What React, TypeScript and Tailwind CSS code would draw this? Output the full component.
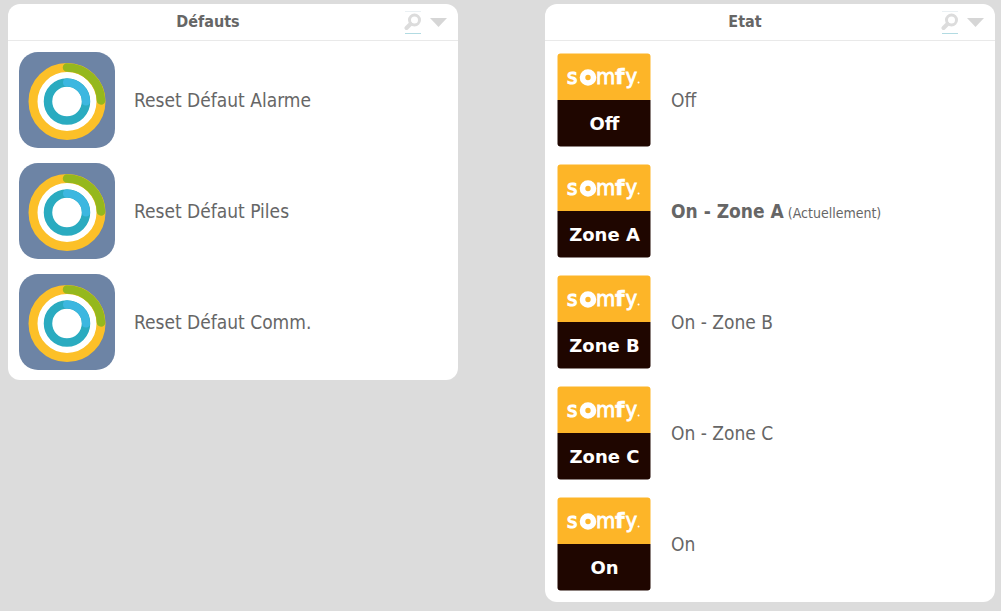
import React from "react";

function RingsIcon() {
  return (
    <svg viewBox="0 0 96 96" className="size-24 shrink-0" aria-hidden="true">
      <rect width="96" height="96" rx="19" fill="#6d84a5" />
      <circle cx="48" cy="49.500" r="34" fill="#fff" />
      <circle cx="48" cy="49.500" r="34" fill="none" stroke="#fcc028" strokeWidth="9" />
      <path d="M48 15.500A34 34 0 0 1 82 48.500" fill="none" stroke="#95b81d" strokeWidth="8.500" strokeLinecap="round" />
      <circle cx="48" cy="49.500" r="19" fill="none" stroke="#2aabc0" strokeWidth="8.500" />
      <path d="M48 30.500A19 19 0 0 1 67 49.500" fill="none" stroke="#3cb7e0" strokeWidth="8" strokeLinecap="round" />
    </svg>
  );
}

function SomfyTile({ label }: { label: string }) {
  return (
    <svg viewBox="0 0 96 96" className="size-24 shrink-0" aria-hidden="true">
      <path d="M1.500 48V4.500a3 3 0 0 1 3-3h87a3 3 0 0 1 3 3V48z" fill="#fdb528" />
      <path d="M1.500 48h93v43.500a3 3 0 0 1-3 3h-87a3 3 0 0 1-3-3z" fill="#1f0600" />
      <g fill="#fff" fontFamily="'DejaVu Sans Condensed', 'DejaVu Sans', sans-serif" fontSize="22">
        <text x="11" y="31.500" stroke="#fff" strokeWidth="1.200">s</text>
        <text x="40" y="31.500" stroke="#fff" strokeWidth="0.800">m</text>
        <text x="59" y="31.500" fontWeight="700" stroke="#fff" strokeWidth="0.500" fontFamily="'DejaVu Sans', sans-serif">f</text>
        <text x="69.500" y="31.500" stroke="#fff" strokeWidth="0.800">y</text>
      </g>
      <circle cx="32" cy="25.500" r="5.500" fill="none" stroke="#fff" strokeWidth="5.600" />
      <circle cx="82.500" cy="30.500" r="1" fill="#fff" />
      <text x="48.500" y="78" textAnchor="middle" fill="#fff" fontFamily="'DejaVu Sans', sans-serif" fontSize="18" fontWeight="700">
        {label}
      </text>
    </svg>
  );
}

function Panel({ title, children }: { title: string; children: React.ReactNode }) {
  return (
    <section className="overflow-hidden rounded-xl bg-white">
      <header className="flex h-[37px] items-center border-b border-[#e9e9e9] pr-2.5">
        <h2 className="flex-1 pl-1 text-center text-base font-bold">{title}</h2>
        <button type="button" aria-label="Rechercher" className="flex w-[18px] justify-center">
          <svg viewBox="0 0 18 24" className="h-6 w-[18px]" aria-hidden="true">
            <path d="M1 1.500h16" stroke="#eaf0f3" />
            <path d="M1 23.500h16" stroke="#b2dbe2" />
            <circle cx="10.500" cy="10" r="5" fill="none" stroke="#dcdcdc" strokeWidth="3" />
            <path d="M6.500 14L2.500 18" stroke="#dcdcdc" strokeWidth="4" strokeLinecap="round" />
          </svg>
        </button>
        <button type="button" aria-label="Menu" className="ml-2 flex w-[18px] justify-center">
          <svg viewBox="0 0 18 10" className="h-2.5 w-[18px]" aria-hidden="true">
            <path d="M0 1h17L8.500 10z" fill="#d6d6d6" />
          </svg>
        </button>
      </header>
      <ul className="flex flex-col gap-[15px] px-[11px] pt-[11px] pb-2.5">{children}</ul>
    </section>
  );
}

function Row({ icon, label, current }: { icon: React.ReactNode; label: string; current?: boolean }) {
  return (
    <li>
      <button type="button" className="flex w-full items-center gap-[19px] text-left">
        {icon}
        <span className="text-[19px] leading-7">
          <span className={current ? "font-bold" : ""}>{label}</span>
          {current && <span className="text-sm"> (Actuellement)</span>}
        </span>
      </button>
    </li>
  );
}

const resets = ["Reset Défaut Alarme", "Reset Défaut Piles", "Reset Défaut Comm."];
const states = [
  { tile: "Off", label: "Off" },
  { tile: "Zone A", label: "On - Zone A", current: true },
  { tile: "Zone B", label: "On - Zone B" },
  { tile: "Zone C", label: "On - Zone C" },
  { tile: "On", label: "On" },
];

export default function App() {
  return (
    <main className="grid min-h-screen grid-cols-2 items-start gap-x-[87px] bg-[#dcdcdc] pt-1 pr-1.5 pb-2 pl-2 font-['DejaVu_Sans_Condensed','DejaVu_Sans',sans-serif] text-[#666]">
      <Panel title="Défauts">
        {resets.map((label) => (
          <Row key={label} icon={<RingsIcon />} label={label} />
        ))}
      </Panel>
      <Panel title="Etat">
        {states.map((s) => (
          <Row key={s.label} icon={<SomfyTile label={s.tile} />} label={s.label} current={s.current} />
        ))}
      </Panel>
    </main>
  );
}
